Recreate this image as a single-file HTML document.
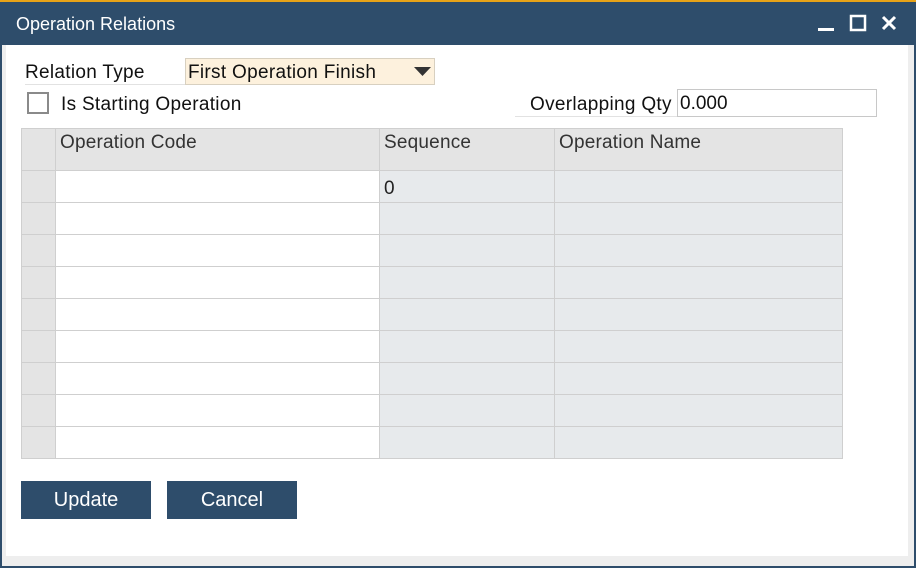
<!DOCTYPE html>
<html><head><style>
*{margin:0;padding:0;box-sizing:border-box}
body{width:916px;height:568px;background:#2e4d6b;font-family:"Liberation Sans",sans-serif;position:relative;overflow:hidden;color:#222}
.top{position:absolute;left:0;top:0;width:916px;height:2px;background:#e8a317}
.title{position:absolute;left:16px;top:14px;font-size:18px;color:#fff}
.body{position:absolute;left:2px;top:45px;width:912px;height:521px;background:#eeeeee}
.inner{position:absolute;left:4px;top:0;width:902px;height:511px;background:#fff}
.abs{position:absolute}
.lbl{font-size:19px;letter-spacing:0.3px;color:#111}
table{position:absolute;left:21px;top:128px;border-collapse:collapse}
td{border:1px solid #cfcfcf;height:32px;padding:0 4px;font-size:19px;letter-spacing:0.2px;vertical-align:middle}
tr.h td{background:#e4e4e4;height:42px;vertical-align:top;padding-top:3px;color:#333}
td.g{background:#e7eaec}
td.r{background:#e4e4e4}
.btn{position:absolute;top:481px;width:130px;height:38px;background:#2e4d6b;color:#fff;font-size:20px;text-align:center;line-height:38px}
</style></head><body>
<div class="top"></div>
<div class="title">Operation Relations</div>
<svg class="abs" style="left:815px;top:14px" width="85" height="20">
<rect x="3" y="14" width="16" height="3" fill="#fff"/>
<rect x="36" y="2" width="14" height="14" fill="none" stroke="#fff" stroke-width="2.5"/>
<path d="M68 3L80 15M80 3L68 15" stroke="#fff" stroke-width="3"/>
</svg>
<div class="body"><div class="inner"></div></div>
<div class="abs lbl" style="left:25px;top:62px">Relation Type</div>
<div class="abs" style="left:25px;top:84px;width:160px;height:1px;background:#e2e2e2"></div>
<div class="abs" style="left:185px;top:58px;width:250px;height:27px;background:#fdf1dd;border:1px solid #d8d0c0;font-size:19px;letter-spacing:0.3px;padding:3px 0 0 2px;color:#111">First Operation Finish</div>
<svg class="abs" style="left:414px;top:67px" width="18" height="10"><path d="M0 0H17L8.5 9Z" fill="#333"/></svg>
<div class="abs" style="left:27px;top:92px;width:22px;height:22px;border:2px solid #8a8a8a;background:#fff"></div>
<div class="abs lbl" style="left:61px;top:94px">Is Starting Operation</div>
<div class="abs lbl" style="left:530px;top:94px">Overlapping Qty</div>
<div class="abs" style="left:515px;top:116px;width:162px;height:1px;background:#e2e2e2"></div>
<div class="abs" style="left:677px;top:89px;width:200px;height:28px;border:1px solid #c8c8c8;background:#fff;font-size:19px;padding:3px 0 0 2px;color:#111">0.000</div>
<table>
<tr class="h"><td class="r" style="width:34px"></td><td style="width:324px">Operation Code</td><td style="width:175px">Sequence</td><td style="width:288px">Operation Name</td></tr>
<tr><td class="r"></td><td></td><td class="g" style="padding-top:4px">0</td><td class="g"></td></tr>
<tr><td class="r"></td><td></td><td class="g"></td><td class="g"></td></tr>
<tr><td class="r"></td><td></td><td class="g"></td><td class="g"></td></tr>
<tr><td class="r"></td><td></td><td class="g"></td><td class="g"></td></tr>
<tr><td class="r"></td><td></td><td class="g"></td><td class="g"></td></tr>
<tr><td class="r"></td><td></td><td class="g"></td><td class="g"></td></tr>
<tr><td class="r"></td><td></td><td class="g"></td><td class="g"></td></tr>
<tr><td class="r"></td><td></td><td class="g"></td><td class="g"></td></tr>
<tr><td class="r"></td><td></td><td class="g"></td><td class="g"></td></tr>
</table>
<div class="btn" style="left:21px">Update</div>
<div class="btn" style="left:167px">Cancel</div>
</body></html>
